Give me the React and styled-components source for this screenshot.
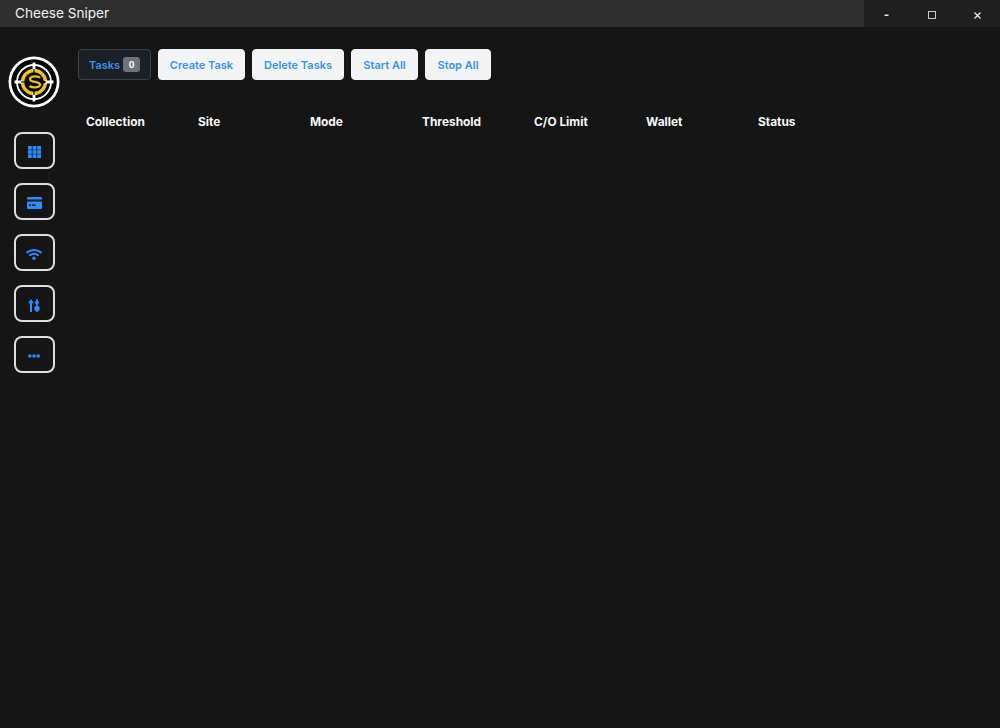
import React from "react";
import styled, { createGlobalStyle } from "styled-components";

const Global = createGlobalStyle`
  html, body { margin: 0; padding: 0; background: #151515; height: 100%; }
  #root { height: 100%; }
  * { box-sizing: border-box; }
`;

const Windowed = styled.div`
  width: 1000px;
  height: 728px;
  background: #151515;
  display: flex;
  flex-direction: column;
  font-family: Inter, "Liberation Sans", sans-serif;
  overflow: hidden;
`;

const TitleBar = styled.header`
  height: 27px;
  flex: none;
  display: flex;
  background: #2e2e2e;
`;

const Title = styled.div`
  flex: 1;
  padding-left: 15px;
  font-size: 13.6px;
  line-height: 26px;
  color: #f2f2f2;
`;

const Controls = styled.div`
  width: 136px;
  display: flex;
  background: #1f1f1f;
`;

const Control = styled.div`
  width: 45.33px;
  padding-top: 3px;
  display: flex;
  align-items: center;
  justify-content: center;
`;

const Body = styled.div`
  flex: 1;
  display: flex;
`;

const Sidebar = styled.nav`
  width: 78px;
  flex: none;
  display: flex;
  flex-direction: column;
  padding: 29px 0 0 14px;
`;

const LogoWrap = styled.div`
  width: 52px;
  height: 52px;
  margin: 0 0 24px -6px;
`;

const NavList = styled.div`
  display: flex;
  flex-direction: column;
  gap: 14.3px;
`;

const NavButton = styled.button`
  width: 40.6px;
  height: 36.7px;
  padding: 4px 0 0;
  border: 2px solid #dedede;
  border-radius: 8px;
  background: transparent;
  display: flex;
  align-items: center;
  justify-content: center;
`;

const Main = styled.main`
  flex: 1;
  padding-top: 22px;
`;

const Toolbar = styled.div`
  display: flex;
  gap: 7px;
`;

const Button = styled.button`
  height: 31px;
  width: ${(p) => p.$w}px;
  padding: 0;
  border-radius: 4px;
  border: 1px solid ${(p) => (p.$active ? "#3c4249" : "#f3f4f6")};
  background: ${(p) => (p.$active ? "#1b2027" : "#f3f4f6")};
  color: #3a90ea;
  font-family: inherit;
  font-size: 11px;
  font-weight: 600;
  display: flex;
  align-items: center;
  justify-content: center;
  gap: 3px;
`;

const Badge = styled.span`
  width: 17px;
  height: 15px;
  border-radius: 3px;
  background: #6c7278;
  color: #fff;
  font-size: 8.5px;
  font-weight: 700;
  display: flex;
  align-items: center;
  justify-content: center;
`;

const HeaderRow = styled.div`
  display: grid;
  grid-template-columns: repeat(7, 112px);
  margin-top: 34px;
  padding-left: 8px;
`;

const HeaderCell = styled.div`
  color: #f8f8f8;
  font-size: 11.9px;
  font-weight: 700;
  line-height: 15px;
`;

const blue = "#2d8cff";

const Logo = () => (
  <svg width="52" height="52" viewBox="0 0 52 52">
    <circle cx="26" cy="26" r="25.5" fill="#fff" />
    <circle cx="26" cy="26" r="22.8" fill="#050505" />
    <circle cx="26" cy="26" r="17" fill="none" stroke="#fff" strokeWidth="1.8" />
    <circle cx="26" cy="26" r="11.5" fill="none" stroke="#f2c318" strokeWidth="3.4" />
    <path d="M26 6.500v8M26 37.500v8M6.500 26h8M37.500 26h8" stroke="#fff" strokeWidth="2.800" />
    <path d="M26 13v4M26 35v4M13 26h4" stroke="#050505" strokeWidth="1.200" />
    <path d="M32 21.800c-2-2-10-2.200-10 1.400 0 3.600 10 1.800 10 5.400 0 3.600-8 3.400-10.500 1.400" fill="none" stroke="#f2c318" strokeWidth="2.300" />
    <path d="M33 26h4.500" stroke="#050505" strokeWidth="2" />
  </svg>
);

const GridIcon = () => (
  <svg width="13" height="12" viewBox="0 0 13 12" fill={blue}>
    {[0, 4.6, 9.2].map((x) =>
      [0, 4.2, 8.400].map((y) => <rect key={`${x}-${y}`} x={x} y={y} width="3.800" height="3.600" />)
    )}
  </svg>
);

const CardIcon = () => (
  <svg width="15" height="12" viewBox="0 0 15 12">
    <path fill={blue} d="M1 0h13a1 1 0 0 1 1 1v1.500H0V1a1 1 0 0 1 1-1zM0 4.500h15V11a1 1 0 0 1-1 1H1a1 1 0 0 1-1-1z" />
    <rect x="2" y="7.500" width="2" height="1.500" fill="#151515" />
    <rect x="5" y="7.500" width="3.500" height="1.500" fill="#151515" />
  </svg>
);

const WifiIcon = () => (
  <svg width="16" height="11" viewBox="0 0 16 11" fill="none" stroke={blue} strokeWidth="2" strokeLinecap="round">
    <path d="M1.200 3.400c4-3.200 9.600-3.200 13.600 0" />
    <path d="M4 6.200c2.400-1.800 5.600-1.800 8 0" />
    <circle cx="8" cy="9.200" r="1.700" fill={blue} stroke="none" />
  </svg>
);

const SortIcon = () => (
  <svg width="12" height="13" viewBox="0 0 12 13" fill={blue}>
    <path d="M3 0l3 4.200H4V13H2V4.200H0z" />
    <rect x="8.200" y="0" width="1.600" height="13" />
    <circle cx="9" cy="3.500" r="2" />
    <circle cx="9" cy="9.500" r="2.700" />
  </svg>
);

const DotsIcon = () => (
  <svg width="12" height="4" viewBox="0 0 12 4" fill={blue}>
    <circle cx="1.800" cy="2" r="1.800" />
    <circle cx="6" cy="2" r="1.800" />
    <circle cx="10.200" cy="2" r="1.800" />
  </svg>
);

const MinIcon = () => (
  <svg width="6" height="3" viewBox="0 0 6 3"><rect x="0.500" y="0.500" width="4" height="1.500" fill="#e8e8e8" /></svg>
);
const MaxIcon = () => (
  <svg width="8" height="8" viewBox="0 0 8 8"><rect x="0.500" y="0.500" width="7" height="7" fill="none" stroke="#c8c8c8" /></svg>
);
const CloseIcon = () => (
  <svg width="7" height="7" viewBox="0 0 7 7"><path d="M0.500 0.500l6 6M6.500 0.500l-6 6" stroke="#eeeeee" strokeWidth="1.200" /></svg>
);

const navIcons = [GridIcon, CardIcon, WifiIcon, SortIcon, DotsIcon];
const actions = [
  ["Create Task", 87],
  ["Delete Tasks", 92],
  ["Start All", 67],
  ["Stop All", 66],
];
const columns = ["Collection", "Site", "Mode", "Threshold", "C/O Limit", "Wallet", "Status"];

export default function App() {
  return (
    <Windowed>
      <Global />
      <TitleBar>
        <Title>Cheese Sniper</Title>
        <Controls>
          <Control><MinIcon /></Control>
          <Control><MaxIcon /></Control>
          <Control><CloseIcon /></Control>
        </Controls>
      </TitleBar>
      <Body>
        <Sidebar>
          <LogoWrap><Logo /></LogoWrap>
          <NavList>
            {navIcons.map((Icon, i) => (
              <NavButton key={i}><Icon /></NavButton>
            ))}
          </NavList>
        </Sidebar>
        <Main>
          <Toolbar>
            <Button $active $w={73}>Tasks <Badge>0</Badge></Button>
            {actions.map(([label, w]) => (
              <Button key={label} $w={w}>{label}</Button>
            ))}
          </Toolbar>
          <HeaderRow>
            {columns.map((c) => (
              <HeaderCell key={c}>{c}</HeaderCell>
            ))}
          </HeaderRow>
        </Main>
      </Body>
    </Windowed>
  );
}
